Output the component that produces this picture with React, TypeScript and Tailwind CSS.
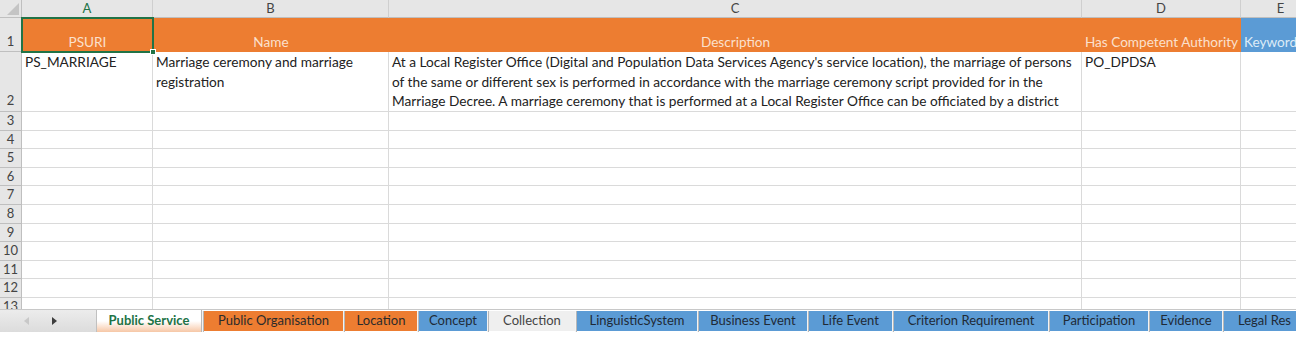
import React from 'react';

const cols = [
  { key: 'A', w: 'w-[131px]' },
  { key: 'B', w: 'w-[236px]' },
  { key: 'C', w: 'w-[693px]' },
  { key: 'D', w: 'w-[159px]' },
  { key: 'E', w: 'w-[80px]' },
];

const descLines = [
  "At a Local Register Office (Digital and Population Data Services Agency's service location), the marriage of persons",
  'of the same or different sex is performed in accordance with the marriage ceremony script provided for in the',
  'Marriage Decree. A marriage ceremony that is performed at a Local Register Office can be officiated by a district',
];

const tabs = [
  { label: 'Public Organisation', w: 'w-[139px]', kind: 'orange' },
  { label: 'Location', w: 'w-[72px]', kind: 'orange' },
  { label: 'Concept', w: 'w-[68px]', kind: 'blue' },
  { label: 'Collection', w: 'w-[86px]', kind: 'plain' },
  { label: 'LinguisticSystem', w: 'w-[120px]', kind: 'blue' },
  { label: 'Business Event', w: 'w-[108px]', kind: 'blue' },
  { label: 'Life Event', w: 'w-[83px]', kind: 'blue' },
  { label: 'Criterion Requirement', w: 'w-[154px]', kind: 'blue' },
  { label: 'Participation', w: 'w-[98px]', kind: 'blue' },
  { label: 'Evidence', w: 'w-[72px]', kind: 'blue' },
];

const tabColor: Record<string, string> = {
  orange: 'bg-[#ed7d31] text-[#2b2b2b]',
  blue: 'bg-[#5b9bd5] text-[#1f2a36]',
  plain: 'bg-[#efefef] text-[#444]',
};

function RowHead({ n, h, bottom }: { n: number; h: string; bottom?: boolean }) {
  return (
    <div
      className={`w-[22px] shrink-0 ${h} bg-[#e6e6e6] border-r border-b border-[#bfbfbf] text-[#444] text-[13px] flex justify-center ${
        bottom ? 'items-end' : 'items-center'
      }`}
    >
      {n}
    </div>
  );
}

function EmptyRow({ n }: { n: number }) {
  return (
    <div className="flex">
      <RowHead n={n} h="h-[18.6px]" />
      {cols.map((c) => (
        <div key={c.key} className={`${c.w} shrink-0 h-[18.6px] border-r border-b border-[#dadada]`} />
      ))}
    </div>
  );
}

export default function App() {
  return (
    <div
      className="w-[1296px] h-[338px] overflow-hidden bg-white flex flex-col relative"
      style={{ fontFamily: 'Lato, "Open Sans", sans-serif' }}
    >
      {/* column headers */}
      <div className="flex h-[18px] shrink-0">
        <div className="w-[22px] shrink-0 bg-[#e6e6e6] border-r border-b border-[#bfbfbf] flex items-end justify-end p-[2px]">
          <svg width="12" height="12" viewBox="0 0 12 12">
            <polygon points="12,0 12,12 0,12" fill="#c4c4c4" />
          </svg>
        </div>
        {cols.map((c) => (
          <div
            key={c.key}
            className={`${c.w} shrink-0 bg-[#e6e6e6] border-r border-[#cfcfcf] border-b ${
              c.key === 'A' ? 'border-b-[#217346] bg-[#d4d4d4] text-[#217346]' : 'border-b-[#bfbfbf] text-[#444]'
            } text-[13px] flex items-center justify-center`}
          >
            {c.key}
          </div>
        ))}
      </div>

      {/* row 1: headers */}
      <div className="flex h-[34px] shrink-0 relative text-[13.6px] text-[#fbe0cd]">
        <RowHead n={1} h="h-[34px]" bottom />
        <div className="w-[131px] shrink-0 bg-[#ed7d31] flex items-end justify-center">PSURI</div>
        <div className="w-[236px] shrink-0 bg-[#ed7d31] flex items-end justify-center">Name</div>
        <div className="w-[693px] shrink-0 bg-[#ed7d31] flex items-end justify-center">Description</div>
        <div className="w-[159px] shrink-0 bg-[#ed7d31] flex items-end justify-center whitespace-nowrap">
          Has Competent Authority
        </div>
        <div className="w-[80px] shrink-0 bg-[#5b9bd5] text-[#ddebf7] flex items-end pl-[3px] whitespace-nowrap overflow-hidden">
          Keyword
        </div>
        {/* selection */}
        <div className="absolute left-[21px] top-[-1px] w-[133px] h-[36px] border-2 border-[#217346] pointer-events-none" />
        <div className="absolute left-[150px] top-[31px] w-[6px] h-[6px] bg-[#217346] border border-white" />
      </div>

      {/* row 2: data */}
      <div className="flex h-[60px] shrink-0 text-[13.66px] text-[#222] leading-[19.7px]">
        <RowHead n={2} h="h-[60px]" bottom />
        <div className="w-[131px] shrink-0 border-r border-b border-[#dadada] pl-[3px] pt-[1px]">PS_MARRIAGE</div>
        <div className="w-[236px] shrink-0 border-r border-b border-[#dadada] pl-[3px] pt-[1px]">
          <div className="whitespace-nowrap">Marriage ceremony and marriage</div>
          <div className="whitespace-nowrap">registration</div>
        </div>
        <div className="w-[693px] shrink-0 border-r border-b border-[#dadada] pl-[3px] pt-[1px] overflow-hidden">
          {descLines.map((l) => (
            <div key={l} className="whitespace-nowrap">
              {l}
            </div>
          ))}
        </div>
        <div className="w-[159px] shrink-0 border-r border-b border-[#dadada] pl-[3px] pt-[1px]">PO_DPDSA</div>
        <div className="w-[80px] shrink-0 border-r border-b border-[#dadada]" />
      </div>

      {[3, 4, 5, 6, 7, 8, 9, 10, 11, 12, 13].map((n) => (
        <EmptyRow key={n} n={n} />
      ))}

      {/* sheet tabs */}
      <div className="absolute left-0 right-0 top-[309px] bottom-0 bg-white border-t border-[#c8c8c8] flex items-start">
        <div className="w-[97px] h-[22px] shrink-0 bg-gradient-to-b from-[#ececec] to-[#dcdcdc] border-r border-[#c0c0c0] flex items-center">
          <svg width="6" height="8" viewBox="0 0 6 8" className="ml-[24px]">
            <polygon points="5,0 5,8 0,4" fill="#c8c8c8" />
          </svg>
          <svg width="6" height="8" viewBox="0 0 6 8" className="ml-[21px]">
            <polygon points="1,0 1,8 6,4" fill="#3d3d3d" />
          </svg>
        </div>
        <div className="w-[105px] h-[22px] shrink-0 bg-gradient-to-b from-white via-white to-[#f6c7a6] border-r border-[#b8b8b8] text-[#217346] font-bold text-[13px] flex items-center justify-center">
          Public Service
        </div>
        {tabs.map((t) => (
          <div key={t.label} className="flex shrink-0 h-[22px] pt-[1px]">
            <div className="w-[2px] h-full bg-[#f3f3f3] border-r border-[#b8b8b8]" />
            <div
              className={`${t.w} h-[20px] ${tabColor[t.kind]} text-[13px] flex items-center justify-center whitespace-nowrap overflow-hidden`}
            >
              {t.label}
            </div>
          </div>
        ))}
        <div className="flex flex-1 min-w-0 h-[22px] pt-[1px]">
          <div className="w-[2px] h-full shrink-0 bg-[#f3f3f3] border-r border-[#b8b8b8]" />
          <div className="flex-1 h-[20px] bg-[#5b9bd5] text-[#1f2a36] text-[13px] flex items-center pl-[14px] whitespace-nowrap overflow-hidden">
            Legal Res
          </div>
        </div>
      </div>
    </div>
  );
}
